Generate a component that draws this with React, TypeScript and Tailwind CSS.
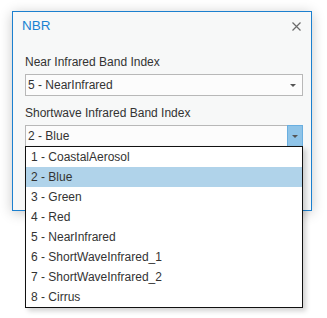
import { useState } from 'react'

const bands = [
  '1 - CoastalAerosol',
  '2 - Blue',
  '3 - Green',
  '4 - Red',
  '5 - NearInfrared',
  '6 - ShortWaveInfrared_1',
  '7 - ShortWaveInfrared_2',
  '8 - Cirrus',
]

function Caret() {
  return (
    <svg width="6" height="3" viewBox="0 0 6 3">
      <path d="M0 0h6L3 3z" fill="#555" />
    </svg>
  )
}

export default function App() {
  const [selected, setSelected] = useState('2 - Blue')

  return (
    <div className="w-[327px] h-[318px] bg-white pt-[11px] pl-[12px] font-['Liberation_Sans',Arial,sans-serif] text-[12px] text-[#333]">
      <div className="relative w-[300px] h-[200px] border border-[#1c80cf] bg-[#f7f8f8] shadow-[0_2px_12px_rgba(0,0,0,0.22)]">
        <div className="flex items-center justify-between pl-[9px] pr-[10px] h-[28px]">
          <span className="text-[13.5px] text-[#1a82d2] leading-none">NBR</span>
          <svg width="9" height="9" viewBox="0 0 9 9">
            <path d="M0.5 0.5l8 8M8.5 0.5l-8 8" stroke="#6b6b6b" strokeWidth="1.2" />
          </svg>
        </div>

        <div className="pl-[12px] pr-[8px] pt-[12px]">
          <div className="leading-[20px]">Near Infrared Band Index</div>
          <div className="mt-[2px] h-[22px] border border-[#b8b8b8] bg-[#fcfcfc] flex items-center justify-between pl-[2px] pr-[6px]">
            <span>5 - NearInfrared</span>
            <Caret />
          </div>

          <div className="mt-[7px] leading-[20px]">Shortwave Infrared Band Index</div>
          <div className="relative mt-[2px] h-[22px] border border-[#b8b8b8] bg-[#fcfcfc] flex items-center pl-[2px]">
            <span className="flex-1">{selected}</span>
            <div className="self-stretch w-[16px] -my-[1px] -mr-[1px] bg-[#8fc4e8] border border-[#6aafe0] flex items-center justify-center">
              <Caret />
            </div>

            <div className="absolute left-[-1px] top-[20px] w-[278px] border border-[#111] bg-white shadow-[3px_3px_5px_rgba(0,0,0,0.18)] z-10">
              {bands.map((b) => (
                <div
                  key={b}
                  onClick={() => setSelected(b)}
                  className={
                    'h-[20px] leading-[20px] pl-[5px] cursor-default ' +
                    (b === selected ? 'bg-[#b0d3ea]' : '')
                  }
                >
                  {b}
                </div>
              ))}
            </div>
          </div>
        </div>
      </div>
    </div>
  )
}
